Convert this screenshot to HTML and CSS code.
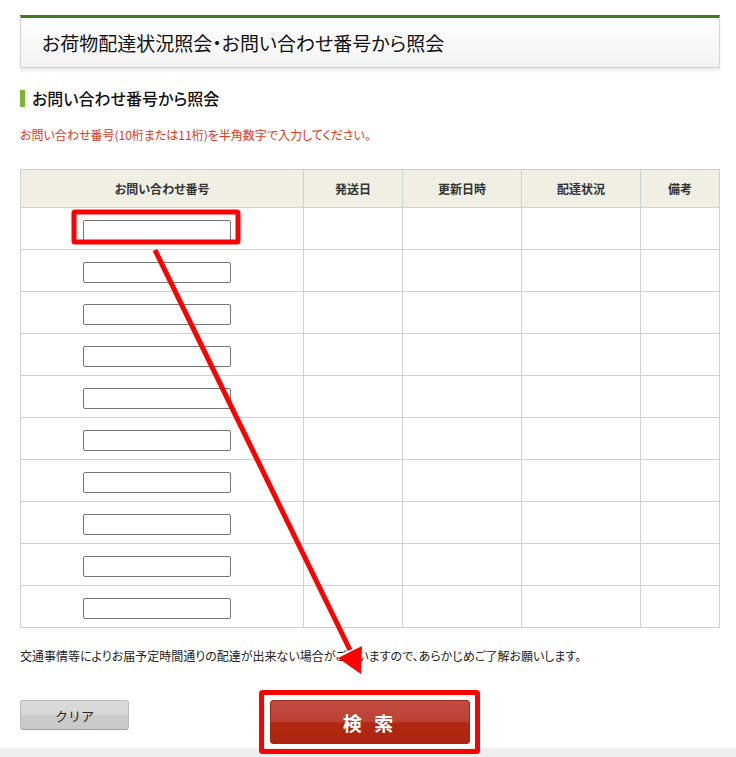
FILE: index.html
```html
<!DOCTYPE html>
<html lang="ja">
<head>
    <meta charset="UTF-8">
    <meta name="viewport" content="width=device-width, initial-scale=1.0">
    <title>お荷物配達状況照会</title>
    <link rel="stylesheet" href="styles.css">
</head>
<body>
    <div class="page">
        <div class="title-box">
            <h1>お荷物配達状況照会・お問い合わせ番号から照会</h1>
        </div>

        <h2 class="section-title">お問い合わせ番号から照会</h2>
        <p class="notice">お問い合わせ番号(10桁または11桁)を半角数字で入力してください。</p>

        <table class="track-table">
            <colgroup>
                <col class="col-num">
                <col class="col-date">
                <col class="col-wide">
                <col class="col-wide">
                <col class="col-note">
            </colgroup>
            <thead>
                <tr>
                    <th>お問い合わせ番号</th>
                    <th>発送日</th>
                    <th>更新日時</th>
                    <th>配達状況</th>
                    <th>備考</th>
                </tr>
            </thead>
            <tbody>
                <tr><td class="num"><input type="text"></td><td></td><td></td><td></td><td></td></tr>
                <tr><td class="num"><input type="text"></td><td></td><td></td><td></td><td></td></tr>
                <tr><td class="num"><input type="text"></td><td></td><td></td><td></td><td></td></tr>
                <tr><td class="num"><input type="text"></td><td></td><td></td><td></td><td></td></tr>
                <tr><td class="num"><input type="text"></td><td></td><td></td><td></td><td></td></tr>
                <tr><td class="num"><input type="text"></td><td></td><td></td><td></td><td></td></tr>
                <tr><td class="num"><input type="text"></td><td></td><td></td><td></td><td></td></tr>
                <tr><td class="num"><input type="text"></td><td></td><td></td><td></td><td></td></tr>
                <tr><td class="num"><input type="text"></td><td></td><td></td><td></td><td></td></tr>
                <tr><td class="num"><input type="text"></td><td></td><td></td><td></td><td></td></tr>
            </tbody>
        </table>

        <p class="footnote">交通事情等によりお届予定時間通りの配達が出来ない場合がございますので、あらかじめご了解お願いします。</p>

        <div class="actions">
            <button class="btn-clear" type="button">クリア</button>
            <button class="btn-search" type="button">検 索</button>
        </div>
    </div>
    <div class="footer-band"></div>

    <!-- annotation overlay -->
    <svg class="overlay" width="736" height="757" viewBox="0 0 736 757">
        <rect x="74" y="212" width="164" height="30" fill="none" stroke="#ff0000" stroke-width="5" rx="1"/>
        <line x1="155" y1="250" x2="350" y2="650" stroke="#ff0000" stroke-width="5"/>
        <polygon points="361,674 338,658 362,646" fill="#ff0000"/>
        <rect x="261.5" y="692.5" width="216" height="59" fill="none" stroke="#ff0000" stroke-width="5" rx="1"/>
    </svg>
</body>
</html>
```

FILE: styles.css
```css
body {
    margin: 0;
    background: #fff;
    color: #222;
    font-family: "Noto Sans CJK JP", "Liberation Sans", sans-serif;
    font-feature-settings: "palt";
    position: relative;
    min-height: 757px;
}

.page {
    padding: 15px 16px 0 20px;
}

.title-box {
    border-top: 3px solid #3f7a1f;
    border-left: 1px solid #d4d4d4;
    border-right: 1px solid #d4d4d4;
    border-bottom: 1px solid #cfcfcf;
    background: linear-gradient(#ffffff, #f3f3f3);
    box-shadow: 0 3px 3px rgba(0,0,0,0.08);
    height: 49px;
    display: flex;
    align-items: center;
    padding-left: 21px;
}

.title-box h1 {
    margin: 0;
    font-size: 19px;
    font-weight: normal;
    color: #111;
}

.section-title {
    margin: 22px 0 0;
    border-left: 5px solid #7ab535;
    padding-left: 7px;
    font-size: 16px;
    font-weight: 500;
    line-height: 17px;
    color: #111;
}

.notice {
    margin: 20px 0 0;
    font-size: 12px;
    line-height: 16px;
    color: #e4381a;
}

.track-table {
    margin-top: 26px;
    width: 699px;
    border-collapse: collapse;
    table-layout: fixed;
}

.col-num { width: 283px; }
.col-date { width: 99px; }
.col-wide { width: 119px; }
.col-note { width: 79px; }

.track-table th,
.track-table td {
    border: 1px solid #cdd1d6;
    padding: 0;
}

.track-table th {
    height: 37px;
    background: #efefe3;
    font-size: 12px;
    font-weight: bold;
    color: #333;
}

.track-table td {
    height: 41px;
}

.track-table td.num {
    text-align: center;
    padding-right: 11px;
}

.track-table input {
    box-sizing: border-box;
    width: 148px;
    height: 21px;
    border: 1px solid #777;
    border-radius: 2px;
    margin: 0;
    padding: 0 4px;
    vertical-align: middle;
}

.footnote {
    margin: 20px 0 0;
    font-size: 12px;
    line-height: 16px;
    color: #222;
}

.actions {
    margin-top: 36px;
    display: flex;
    align-items: flex-start;
    gap: 141px;
}

.actions button {
    font-family: inherit;
    cursor: pointer;
    padding: 0;
}

.btn-clear {
    width: 109px;
    height: 30px;
    border: 1px solid #bdbdbd;
    border-bottom-color: #9e9e9e;
    border-radius: 3px;
    background: linear-gradient(#dadada 0%, #d6d6d6 50%, #cacaca 50%, #c9c9c9 100%);
    font-size: 13px;
    color: #222;
}

.btn-search {
    width: 200px;
    height: 44px;
    border: 1px solid #9c2a1b;
    border-radius: 3px;
    background: linear-gradient(#c24a3e 0%, #bd4236 48%, #b12812 52%, #ad2410 100%);
    font-size: 19px;
    font-weight: bold;
    color: #fff;
    letter-spacing: 4px;
}

.footer-band {
    position: absolute;
    left: 0;
    right: 0;
    bottom: 0;
    height: 9px;
    background: #efeff0;
}

.overlay {
    position: absolute;
    top: 0;
    left: 0;
    pointer-events: none;
}
```
